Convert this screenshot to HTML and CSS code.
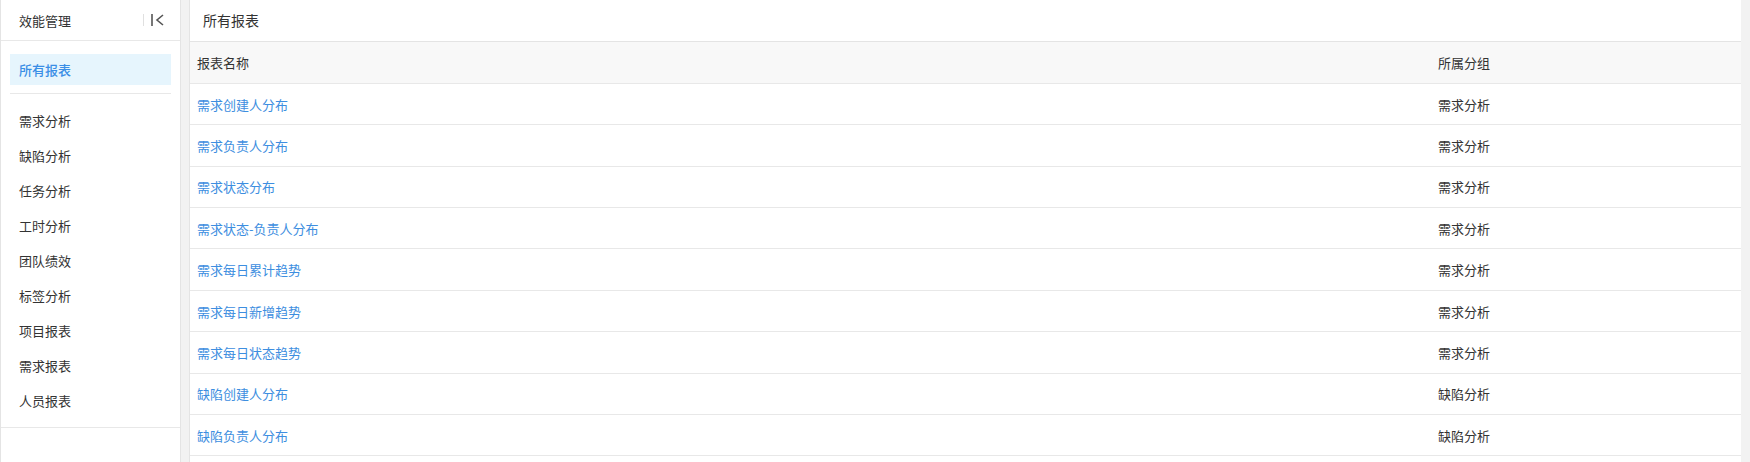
FILE: index.html
```html
<!DOCTYPE html>
<html lang="zh-CN">
<head>
    <meta charset="UTF-8">
    <title>效能管理</title>
    <link rel="stylesheet" href="styles.css">
</head>
<body>
    <div class="layout">
        <aside class="sidebar">
            <div class="side-head">
                <span class="side-title">效能管理</span>
                <span class="collapse">
                    <svg width="13" height="14" viewBox="0 0 13 14">
                        <line x1="1" y1="1" x2="1" y2="13" stroke="#555" stroke-width="1.6"/>
                        <polyline points="12,2 6,7 12,12" fill="none" stroke="#555" stroke-width="1.6"/>
                    </svg>
                </span>
            </div>
            <div class="side-top">
                <a class="side-item active">所有报表</a>
            </div>
            <ul class="side-menu">
                <li>需求分析</li>
                <li>缺陷分析</li>
                <li>任务分析</li>
                <li>工时分析</li>
                <li>团队绩效</li>
                <li>标签分析</li>
                <li>项目报表</li>
                <li>需求报表</li>
                <li>人员报表</li>
            </ul>
        </aside>

        <main class="main">
            <div class="main-head">所有报表</div>
            <table class="report-table">
                <thead>
                    <tr><th class="col-name">报表名称</th><th>所属分组</th></tr>
                </thead>
                <tbody>
                    <tr><td><a>需求创建人分布</a></td><td>需求分析</td></tr>
                    <tr><td><a>需求负责人分布</a></td><td>需求分析</td></tr>
                    <tr><td><a>需求状态分布</a></td><td>需求分析</td></tr>
                    <tr><td><a>需求状态-负责人分布</a></td><td>需求分析</td></tr>
                    <tr><td><a>需求每日累计趋势</a></td><td>需求分析</td></tr>
                    <tr><td><a>需求每日新增趋势</a></td><td>需求分析</td></tr>
                    <tr><td><a>需求每日状态趋势</a></td><td>需求分析</td></tr>
                    <tr><td><a>缺陷创建人分布</a></td><td>缺陷分析</td></tr>
                    <tr><td><a>缺陷负责人分布</a></td><td>缺陷分析</td></tr>
                </tbody>
            </table>
        </main>
    </div>
</body>
</html>
```

FILE: styles.css
```css
html, body {
    margin: 0;
    padding: 0;
    height: 100%;
}
body {
    font-family: "Noto Sans CJK SC", "Noto Sans", sans-serif;
    font-size: 13px;
    color: #333;
    background-color: #f2f2f2;
    overflow: hidden;
}
.layout {
    display: flex;
    height: 462px;
}
.sidebar {
    width: 179px;
    background-color: #fff;
    border-left: 1px solid #e4e4e4;
    border-right: 1px solid #e4e4e4;
    margin-right: 8px;
    flex-shrink: 0;
}
.side-head {
    height: 41px;
    border-bottom: 1px solid #e8e8e8;
    display: flex;
    align-items: center;
    padding: 0 16px 0 18px;
    box-sizing: border-box;
}
.side-title {
    flex: 1;
}
.collapse {
    display: flex;
    align-items: center;
    border-left: 1px solid #e0e0e0;
    padding-left: 7px;
    height: 12px;
}
.collapse svg {
    display: block;
}
.side-top {
    padding: 13px 0 8px;
    margin: 0 9px;
    border-bottom: 1px solid #e8e8e8;
}
.side-item {
    display: block;
    height: 31px;
    line-height: 31px;
    padding-left: 9px;
    cursor: pointer;
}
.side-item.active {
    background-color: #e6f5fd;
    color: #3a8ee6;
    font-weight: 500;
}
.side-menu {
    list-style: none;
    margin: 0;
    padding: 9px 0 9px;
    border-bottom: 1px solid #e8e8e8;
}
.side-menu li {
    height: 35px;
    line-height: 35px;
    padding-left: 18px;
}
.main {
    flex: 1;
    background-color: #fff;
    border-left: 1px solid #e4e4e4;
    margin-right: 9px;
    min-width: 0;
}
.main-head {
    height: 42px;
    line-height: 40px;
    padding-left: 13px;
    font-size: 14px;
    border-bottom: 1px solid #e4e4e4;
    box-sizing: border-box;
}
.report-table {
    width: 100%;
    border-collapse: collapse;
}
.report-table th,
.report-table td {
    height: 41.4px;
    padding: 0 0 0 7px;
    text-align: left;
    font-weight: normal;
    border-bottom: 1px solid #e8e8e8;
    box-sizing: border-box;
}
.report-table th {
    background-color: #f8f8f8;
}
.col-name {
    width: 1241px;
}
.report-table a {
    color: #3d8ee0;
    cursor: pointer;
}
```
